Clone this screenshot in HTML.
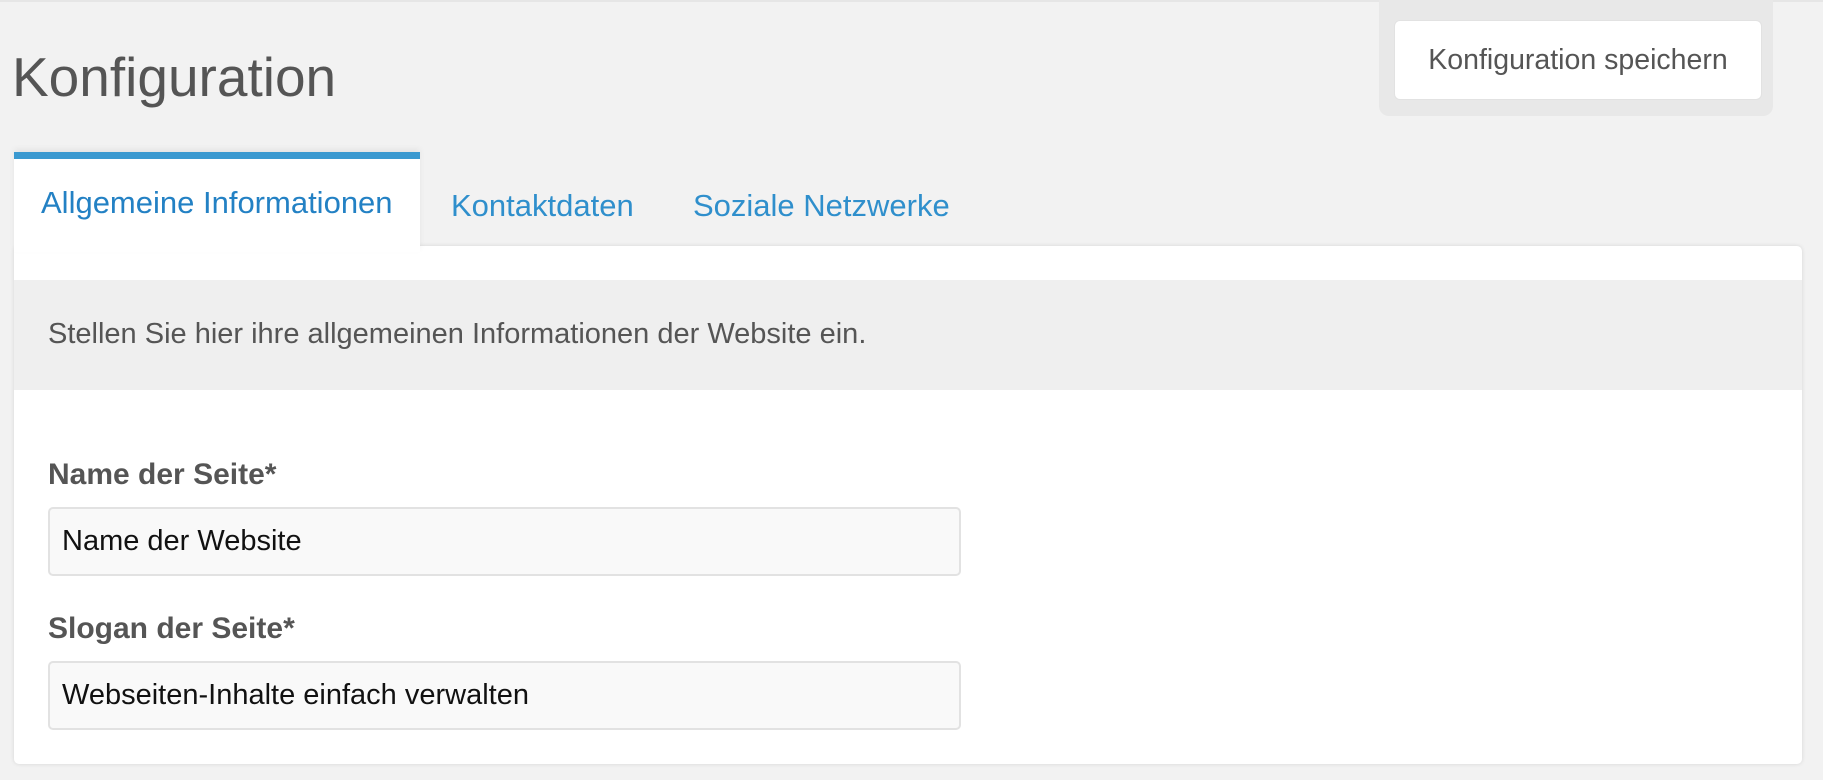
<!DOCTYPE html>
<html><head><meta charset="utf-8"><style>
*{box-sizing:border-box;margin:0;padding:0}
body{width:1823px;height:780px;background:#f2f2f2;font-family:"Liberation Sans",Arial,sans-serif;position:relative;overflow:hidden;border-top:2px solid #e6e6e6}
.abs{position:absolute;white-space:nowrap}
h1{position:absolute;left:12px;top:40px;font-size:55px;font-weight:normal;color:#555;line-height:70px}
.bwrap{position:absolute;left:1379px;top:-2px;width:394px;height:116px;background:#e8e8e8;border-radius:0 0 10px 10px}
.btn{position:absolute;left:15px;top:20px;width:368px;height:80px;background:#fff;border-radius:6px;border:1px solid #e2e2e2;font-size:28.5px;color:#555;text-align:center;line-height:78px}
.card{position:absolute;left:14px;top:244px;width:1788px;height:518px;background:#fff;border-radius:5px;box-shadow:0 0 4px rgba(0,0,0,.12)}
.tab{position:absolute;left:14px;top:150px;width:406px;height:100px;background:#fff;border-top:7px solid #3a99d0;box-shadow:0 -3px 6px rgba(0,0,0,.06)}
.t{font-size:31px;color:#2f8fcc}
.band{position:absolute;left:14px;top:278px;width:1788px;height:110px;background:#efefef}
.lbl{font-size:30px;font-weight:bold;color:#555}
.inp{position:absolute;left:48px;width:913px;background:#f9f9f9;border:2px solid #e2e2e2;border-radius:5px;font-size:29px;color:#111;padding-left:12px}
</style></head><body>
<h1>Konfiguration</h1>
<div class="bwrap"><div class="btn">Konfiguration speichern</div></div>
<div class="card"></div>
<div class="tab"></div>
<div class="abs t" style="left:41px;top:183px;color:#2381c4">Allgemeine Informationen</div>
<div class="abs t" style="left:451px;top:186px">Kontaktdaten</div>
<div class="abs t" style="left:693px;top:186px">Soziale Netzwerke</div>
<div class="band"></div>
<div class="abs" style="left:48px;top:316px;font-size:29px;color:#555">Stellen Sie hier ihre allgemeinen Informationen der Website ein.</div>
<div class="abs lbl" style="left:48px;top:456px">Name der Seite*</div>
<div class="inp" style="top:505px;height:69px;line-height:65px">Name der Website</div>
<div class="abs lbl" style="left:48px;top:610px">Slogan der Seite*</div>
<div class="inp" style="top:659px;height:69px;line-height:65px">Webseiten-Inhalte einfach verwalten</div>
</body></html>
